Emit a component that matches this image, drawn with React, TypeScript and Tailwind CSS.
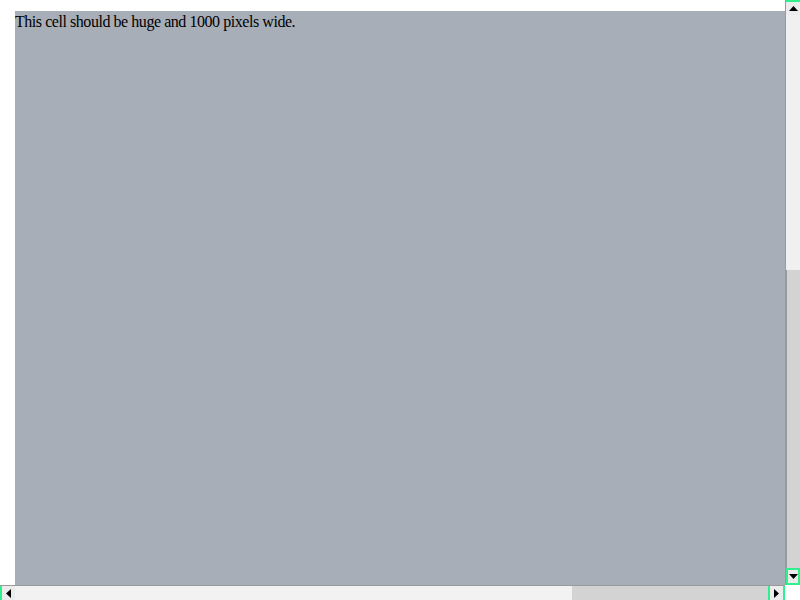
import React from 'react';

const green = 'border-[#2ff08c]';

const Arrow: React.FC<{ dir: 'up' | 'down' | 'left' | 'right' }> = ({ dir }) => {
  const pts = {
    up: '0,5 4.5,0 9,5',
    down: '0,0 9,0 4.5,5',
    left: '5,0 5,9 0,4.5',
    right: '0,0 0,9 5,4.5',
  }[dir];
  const vertical = dir === 'up' || dir === 'down';
  return (
    <svg width={vertical ? 9 : 5} height={vertical ? 5 : 9} viewBox={vertical ? '0 0 9 5' : '0 0 5 9'}>
      <polygon points={pts} fill="#000" />
    </svg>
  );
};

const App: React.FC = () => {
  return (
    <div className="w-[800px] h-[600px] grid grid-cols-[785px_15px] grid-rows-[585px_15px] bg-white overflow-hidden">
      {/* content */}
      <div className="pl-[15px] pt-[11px]">
        <div className="h-full bg-[#a8aeb7] pt-[2px] text-black font-['Liberation_Serif',serif] text-[16px] leading-[18px] tracking-[-0.45px]">
          This cell should be huge and 1000 pixels wide.
        </div>
      </div>

      {/* vertical scrollbar */}
      <div className="flex flex-col border-l border-[#9a9a9a] bg-[#efefef]">
        <div className={`h-[15px] border-t-2 ${green} bg-[#ececec] flex items-center justify-center`}>
          <Arrow dir="up" />
        </div>
        <div className="flex-1 flex flex-col">
          <div className="h-[255px] bg-[#f0f0f0]" />
          <div className="flex-1 bg-[#d3d3d3] border-l border-[#9a9a9a]" />
        </div>
        <div className={`h-[17px] border-2 ${green} bg-[#ececec] flex items-center justify-center`}>
          <Arrow dir="down" />
        </div>
      </div>

      {/* horizontal scrollbar */}
      <div className="flex border-t border-[#9a9a9a] bg-[#efefef]">
        <div className={`w-[15px] border-l-2 ${green} bg-[#ececec] flex items-center justify-center`}>
          <Arrow dir="left" />
        </div>
        <div className="flex-1 flex">
          <div className="w-[557px] bg-[#f2f2f2]" />
          <div className="flex-1 bg-[#d3d3d3]" />
        </div>
        <div className={`w-[17px] border-x-2 ${green} bg-[#ececec] flex items-center justify-center`}>
          <Arrow dir="right" />
        </div>
      </div>

      {/* corner */}
      <div className="bg-white" />
    </div>
  );
};

export default App;
